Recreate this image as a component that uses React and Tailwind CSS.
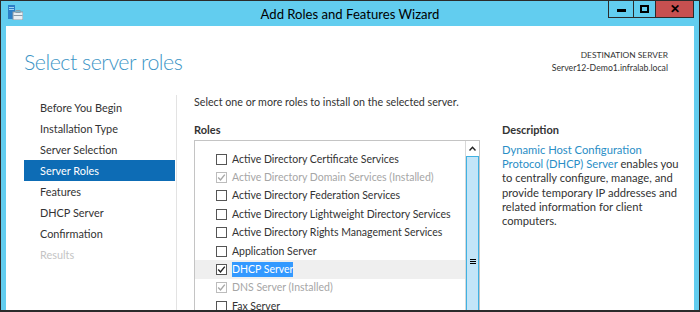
const nav = [
  { label: 'Before You Begin' },
  { label: 'Installation Type' },
  { label: 'Server Selection' },
  { label: 'Server Roles', active: true },
  { label: 'Features' },
  { label: 'DHCP Server' },
  { label: 'Confirmation' },
  { label: 'Results', disabled: true },
]

const roles = [
  { label: 'Active Directory Certificate Services' },
  { label: 'Active Directory Domain Services (Installed)', installed: true },
  { label: 'Active Directory Federation Services' },
  { label: 'Active Directory Lightweight Directory Services' },
  { label: 'Active Directory Rights Management Services' },
  { label: 'Application Server' },
  { label: 'DHCP Server', checked: true, selected: true },
  { label: 'DNS Server (Installed)', installed: true },
  { label: 'Fax Server' },
]

function Check({ checked, disabled }) {
  return (
    <div
      className={
        'w-[11px] h-[11px] border bg-white flex items-center justify-center shrink-0 ' +
        (disabled ? 'border-[#bcbcbc]' : 'border-[#555]')
      }
    >
      {checked && (
        <svg width="9" height="9" viewBox="0 0 9 9">
          <path
            d="M1.2 4.6 L3.5 7 L7.8 1.6"
            fill="none"
            stroke={disabled ? '#a8a8a8' : '#222'}
            strokeWidth="1.4"
          />
        </svg>
      )}
    </div>
  )
}

function AppIcon() {
  return (
    <svg width="16" height="15" viewBox="0 0 16 15">
      <rect x="1" y="0" width="7" height="14" fill="#2b7fc8" />
      <rect x="2" y="2" width="5" height="1" fill="#9fd3f4" />
      <rect x="2" y="4" width="5" height="1" fill="#9fd3f4" />
      <rect x="6" y="7" width="10" height="8" fill="#e8eef3" stroke="#8a9aa8" strokeWidth="1" />
      <rect x="9" y="5.5" width="4" height="2" fill="none" stroke="#8a9aa8" strokeWidth="1" />
      <rect x="6.5" y="10" width="9" height="1" fill="#8a9aa8" />
    </svg>
  )
}

export default function App() {
  return (
    <div
      className="w-[700px] h-[312px] overflow-hidden border-l border-t border-r border-b-2 border-[#2b2b2b] bg-[#62cdef] px-[5px] flex flex-col"
      style={{ fontFamily: 'Lato, "Noto Sans", sans-serif' }}
    >
      <div className="h-[25px] grid grid-cols-[1fr_auto_1fr] items-start shrink-0">
        <div className="pt-[4px] pl-[1px]">
          <AppIcon />
        </div>
        <div className="pt-[3px] text-[13.1px] text-black leading-[20px]">Add Roles and Features Wizard</div>
        <div className="flex justify-end">
          <div className="flex h-[17px] border border-t-0 border-[#2b2b2b]">
            <div className="w-[25px] flex items-center justify-center border-r border-[#2b2b2b]">
              <div className="w-[9px] h-[3px] bg-black mt-[3px]" />
            </div>
            <div className="w-[22px] flex items-center justify-center border-r border-[#2b2b2b]">
              <div className="w-[9px] h-[8px] border-2 border-black" />
            </div>
            <div className="w-[37px] bg-[#c75050] flex items-center justify-center text-[12px] font-bold text-black leading-none">
              ✕
            </div>
          </div>
        </div>
      </div>

      <div className="flex-1 bg-white flex flex-col min-h-0">
        <div className="flex justify-between items-start pl-[18px] pr-[26px] pt-[21px] h-[69px] shrink-0">
          <div className="text-[21.4px] font-light tracking-[-0.5px] text-[#3d95c6] leading-[30px]">
            Select server roles
          </div>
          <div className="text-right text-[#333] pt-[2px]">
            <div className="text-[8.4px] leading-[12px]">DESTINATION SERVER</div>
            <div className="text-[8.7px] leading-[13px]">Server12-Demo1.infralab.local</div>
          </div>
        </div>

        <div className="flex flex-1 min-h-0">
          <div className="w-[151px] ml-[18px] shrink-0 pt-[2px]">
            {nav.map((n) => (
              <div
                key={n.label}
                className={
                  'h-[21px] pl-[16px] text-[10.9px] leading-[21px] ' +
                  (n.active
                    ? 'bg-[#0d6cb5] text-white'
                    : n.disabled
                    ? 'text-[#c4c4c4]'
                    : 'text-[#333]')
                }
              >
                {n.label}
              </div>
            ))}
          </div>
          <div className="w-px bg-[#e3e3e3] ml-[1px] shrink-0" />

          <div className="flex-1 pl-[17px] flex flex-col min-w-0">
            <div className="text-[10.7px] text-[#333] leading-[16px] -mt-[1px]">
              Select one or more roles to install on the selected server.
            </div>
            <div className="flex flex-1 mt-[12px] min-h-0">
              <div className="w-[286px] flex flex-col shrink-0">
                <div className="text-[11px] font-bold text-[#333] leading-[16px] h-[16px]">Roles</div>
                <div className="flex-1 mt-[2px] border border-b-0 border-[#c4c4c4] flex min-h-0">
                  <div className="flex-1 pt-[9px] flex flex-col">
                    {roles.map((r) => (
                      <div
                        key={r.label}
                        className={
                          'h-[18.4px] flex items-center pl-[21px] gap-[5px] whitespace-nowrap shrink-0 ' +
                          (r.selected ? 'bg-[#efefef]' : '')
                        }
                      >
                        <Check checked={r.checked || r.installed} disabled={r.installed} />
                        <span
                          className={
                            'text-[10.5px] leading-[15px] ' +
                            (r.selected
                              ? 'bg-[#3399ff] text-white'
                              : r.installed
                              ? 'text-[#a6a6a6]'
                              : 'text-[#333]')
                          }
                        >
                          {r.label}
                        </span>
                      </div>
                    ))}
                  </div>
                  <div className="w-[14px] border-l border-[#d8d8d8] flex flex-col shrink-0">
                    <div className="h-[14px] bg-white flex items-center justify-center">
                      <svg width="7" height="5" viewBox="0 0 7 5">
                        <path d="M0.5 4.5 L3.5 1.2 L6.5 4.5" fill="none" stroke="#222" strokeWidth="1.4" />
                      </svg>
                    </div>
                    <div className="flex-1 mt-[1px] bg-[#c3e5f8] border-l border-r border-t border-[#3fb1e2] flex flex-col items-center pt-[102px]">
                      <div className="w-[6px] h-[1px] bg-black" />
                      <div className="w-[6px] h-[1px] bg-black mt-[1px]" />
                      <div className="w-[6px] h-[1px] bg-black mt-[1px]" />
                    </div>
                  </div>
                </div>
              </div>

              <div className="ml-[22px] w-[180px] shrink-0">
                <div className="text-[11px] font-bold text-[#333] leading-[16px]">Description</div>
                <div className="mt-[5px] text-[11.2px] leading-[14.2px] text-[#333] whitespace-nowrap">
                  <span className="text-[#2a8ec6]">Dynamic Host Configuration</span>
                  <br />
                  <span className="text-[#2a8ec6]">Protocol (DHCP) Server</span> enables you
                  <br />
                  to centrally configure, manage, and
                  <br />
                  provide temporary IP addresses and
                  <br />
                  related information for client
                  <br />
                  computers.
                </div>
              </div>
            </div>
          </div>
        </div>
      </div>
    </div>
  )
}
